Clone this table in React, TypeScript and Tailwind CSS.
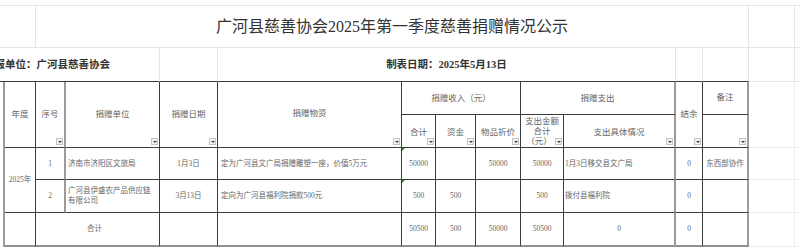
import React from "react";

const Filter = () => (
  <span className="absolute right-px bottom-[2px] w-[7px] h-[7px] border border-[#c4c4c4] bg-[#f4f4f4] flex items-center justify-center">
    <span className="w-0 h-0 border-l-[2px] border-r-[2px] border-t-[2px] border-l-transparent border-r-transparent border-t-[#3a3a3a]" />
  </span>
);

const Green = () => (
  <span className="absolute left-0 top-0 w-0 h-0 border-t-[3px] border-r-[3px] border-t-[#2f8a3a] border-r-transparent" />
);

export default function App() {
  return (
    <div className="w-[800px] h-[251px] overflow-hidden bg-white">
      <div className="grid grid-cols-[5px_31px_30px_94px_58px_184px_34px_40px_45px_43px_112px_27px_46px_46px_5px] grid-rows-[6px_42px_34px_33px_33px_32px_33px_34px_4px] font-['Liberation_Serif','Noto_Sans_CJK_SC',serif] text-[#666]">
        {/* top strip */}
        <div className="col-start-1 col-span-15 row-start-1 border-b border-[#e6e6e6]" />

        {/* title row */}
        <div className="col-start-1 col-span-2 row-start-2 border-r border-b border-[#e6e6e6]" />
        <div className="col-start-3 col-span-11 row-start-2 border-r border-b border-[#e6e6e6] flex items-center justify-center text-[16px] text-[#333] pt-[1px]">
          广河县慈善协会2025年第一季度慈善捐赠情况公示
        </div>
        <div className="col-start-14 row-start-2 border-r border-b border-[#e6e6e6]" />
        <div className="col-start-15 row-start-2 border-b border-[#e6e6e6]" />

        {/* info row */}
        <div className="col-start-1 col-span-4 row-start-3 border-r border-r-[#e6e6e6] border-b border-b-[#3c3c3c] overflow-hidden flex items-center">
          <span className="ml-[-16px] whitespace-nowrap text-[10.5px] font-bold text-[#333]">填报单位：广河县慈善协会</span>
        </div>
        <div className="col-start-5 row-start-3 border-r border-r-[#e6e6e6] border-b border-b-[#3c3c3c]" />
        <div className="col-start-6 col-span-6 row-start-3 border-r border-r-[#e6e6e6] border-b border-b-[#3c3c3c] flex items-center justify-center">
          <span className="whitespace-nowrap text-[10.5px] font-bold text-[#333]">制表日期：2025年5月13日</span>
        </div>
        <div className="col-start-12 row-start-3 border-r border-r-[#e6e6e6] border-b border-b-[#3c3c3c]" />
        <div className="col-start-13 row-start-3 border-r border-r-[#e6e6e6] border-b border-b-[#3c3c3c]" />
        <div className="col-start-14 row-start-3 border-r border-b border-[#e6e6e6]" />
        <div className="col-start-15 row-start-3 border-b border-[#e6e6e6]" />

        {/* left table edge */}
        <div className="col-start-1 row-start-4 row-span-5 border-r-2 border-[#9b9b9b]" />

        {/* header row 1 */}
        <div className="col-start-2 row-start-4 row-span-2 border-r border-b border-[#3c3c3c] flex items-center justify-center text-[8.5px]">年度</div>
        <div className="relative col-start-3 row-start-4 row-span-2 border-r-2 border-r-[#9b9b9b] border-b border-b-[#3c3c3c] flex items-center justify-center text-[8.5px]">序号<Filter /></div>
        <div className="relative col-start-4 row-start-4 row-span-2 border-r border-b border-[#3c3c3c] flex items-center justify-center text-[8.5px]">捐赠单位<Filter /></div>
        <div className="relative col-start-5 row-start-4 row-span-2 border-r border-b border-[#3c3c3c] flex items-center justify-center text-[8.5px]">捐赠日期<Filter /></div>
        <div className="relative col-start-6 row-start-4 row-span-2 border-r border-b border-[#3c3c3c] flex items-center justify-center text-[8.5px] pb-[2px]">捐赠物资<Filter /></div>
        <div className="col-start-7 col-span-3 row-start-4 border-r border-b border-[#3c3c3c] flex items-center justify-center text-[8.5px]">捐赠收入（元）</div>
        <div className="col-start-10 col-span-2 row-start-4 border-r-2 border-r-[#9b9b9b] border-b border-b-[#3c3c3c] flex items-center justify-center text-[8.5px]">捐赠支出</div>
        <div className="relative col-start-12 row-start-4 row-span-2 border-r border-b border-[#3c3c3c] flex items-center justify-center text-[8.5px]">结余<Filter /></div>
        <div className="col-start-13 row-start-4 border-r-2 border-r-[#9b9b9b] border-b border-b-[#3c3c3c] flex items-center justify-center text-[8.5px] pb-[2px]">备注</div>
        <div className="col-start-14 row-start-4 row-span-2 border-r border-b border-[#ededed]" />
        <div className="col-start-15 row-start-4 row-span-2 border-b border-[#ededed]" />

        {/* header row 2 */}
        <div className="relative col-start-7 row-start-5 border-r border-b border-[#3c3c3c] flex items-center justify-center text-[8.5px] pt-[2px]">合计<Filter /></div>
        <div className="relative col-start-8 row-start-5 border-r border-b border-[#3c3c3c] flex items-center justify-center text-[8.5px] pt-[2px]">资金<Filter /></div>
        <div className="relative col-start-9 row-start-5 border-r border-b border-[#3c3c3c] flex items-center justify-center text-[8.5px] pt-[2px]">物品折价<Filter /></div>
        <div className="relative col-start-10 row-start-5 border-r border-b border-[#3c3c3c] flex flex-col items-center justify-center text-[8.5px] leading-[10px]">
          <span>支出金额</span>
          <span>合计</span>
          <span className="pr-[6px]">（元）</span>
          <Filter />
        </div>
        <div className="relative col-start-11 row-start-5 border-r-2 border-r-[#9b9b9b] border-b border-b-[#3c3c3c] flex items-center justify-center text-[8.5px] pt-[2px]">支出具体情况<Filter /></div>
        <div className="relative col-start-13 row-start-5 border-r-2 border-r-[#9b9b9b] border-b border-b-[#3c3c3c]"><Filter /></div>

        {/* data row 1 */}
        <div className="col-start-2 row-start-6 row-span-2 border-r border-b border-[#3c3c3c] flex items-center justify-center text-[7.5px]">2025年</div>
        <div className="col-start-3 row-start-6 border-r-2 border-r-[#9b9b9b] border-b border-b-[#3c3c3c] flex items-center justify-center text-[7.5px]">1</div>
        <div className="col-start-4 row-start-6 border-r border-b border-[#3c3c3c] flex items-center pl-[2px] text-[7.5px] whitespace-nowrap">济南市济阳区文旅局</div>
        <div className="col-start-5 row-start-6 border-r border-b border-[#3c3c3c] flex items-center justify-center text-[7.5px]">1月3日</div>
        <div className="col-start-6 row-start-6 border-r border-b border-[#3c3c3c] flex items-center pl-[3px] text-[7.5px] whitespace-nowrap">定为广河县文广局捐赠雕塑一座，价值5万元</div>
        <div className="relative col-start-7 row-start-6 border-r border-b border-[#3c3c3c] flex items-center justify-center text-[7.5px]"><Green />50000</div>
        <div className="col-start-8 row-start-6 border-r border-b border-[#3c3c3c]" />
        <div className="col-start-9 row-start-6 border-r border-b border-[#3c3c3c] flex items-center justify-center text-[7.5px]">50000</div>
        <div className="col-start-10 row-start-6 border-r border-b border-[#3c3c3c] flex items-center justify-center text-[7.5px]">50000</div>
        <div className="col-start-11 row-start-6 border-r-2 border-r-[#9b9b9b] border-b border-b-[#3c3c3c] flex items-center pl-[1px] text-[7.5px] whitespace-nowrap">1月3日移交县文广局</div>
        <div className="col-start-12 row-start-6 border-r border-b border-[#3c3c3c] flex items-center justify-center text-[7.5px]">0</div>
        <div className="col-start-13 row-start-6 border-r-2 border-r-[#9b9b9b] border-b border-b-[#3c3c3c] flex items-center justify-center text-[7.5px] whitespace-nowrap">东西部协作</div>
        <div className="col-start-14 row-start-6 border-r border-b border-[#ededed]" />
        <div className="col-start-15 row-start-6 border-b border-[#ededed]" />

        {/* data row 2 */}
        <div className="col-start-3 row-start-7 border-r-2 border-r-[#9b9b9b] border-b border-b-[#3c3c3c] flex items-center justify-center text-[7.5px]">2</div>
        <div className="col-start-4 row-start-7 border-r border-b border-[#3c3c3c] flex flex-col justify-center pl-[2px] text-[7.5px] leading-[10px] whitespace-nowrap">
          <span>广河县伊盛农产品供应链</span>
          <span>有限公司</span>
        </div>
        <div className="col-start-5 row-start-7 border-r border-b border-[#3c3c3c] flex items-center justify-center text-[7.5px]">3月13日</div>
        <div className="col-start-6 row-start-7 border-r border-b border-[#3c3c3c] flex items-center pl-[3px] text-[7.5px] whitespace-nowrap">定向为广河县福利院捐款500元</div>
        <div className="relative col-start-7 row-start-7 border-r border-b border-[#3c3c3c] flex items-center justify-center text-[7.5px]"><Green />500</div>
        <div className="col-start-8 row-start-7 border-r border-b border-[#3c3c3c] flex items-center justify-center text-[7.5px]">500</div>
        <div className="col-start-9 row-start-7 border-r border-b border-[#3c3c3c]" />
        <div className="col-start-10 row-start-7 border-r border-b border-[#3c3c3c] flex items-center justify-center text-[7.5px]">500</div>
        <div className="col-start-11 row-start-7 border-r-2 border-r-[#9b9b9b] border-b border-b-[#3c3c3c] flex items-center pl-[1px] text-[7.5px] whitespace-nowrap">拨付县福利院</div>
        <div className="col-start-12 row-start-7 border-r border-b border-[#3c3c3c] flex items-center justify-center text-[7.5px]">0</div>
        <div className="col-start-13 row-start-7 border-r-2 border-r-[#9b9b9b] border-b border-b-[#3c3c3c]" />
        <div className="col-start-14 row-start-7 border-r border-b border-[#ededed]" />
        <div className="col-start-15 row-start-7 border-b border-[#ededed]" />

        {/* total row */}
        <div className="col-start-2 row-start-8 border-r border-r-[#3c3c3c] border-b-2 border-b-[#8f8f8f]" />
        <div className="col-start-3 col-span-2 row-start-8 border-r border-r-[#3c3c3c] border-b-2 border-b-[#8f8f8f] flex items-center justify-center text-[7.5px] pr-[6px]">合计</div>
        <div className="col-start-5 row-start-8 border-r border-r-[#3c3c3c] border-b-2 border-b-[#8f8f8f]" />
        <div className="col-start-6 row-start-8 border-r border-r-[#3c3c3c] border-b-2 border-b-[#8f8f8f]" />
        <div className="col-start-7 row-start-8 border-r border-r-[#3c3c3c] border-b-2 border-b-[#8f8f8f] flex items-center justify-center text-[7.5px]">50500</div>
        <div className="col-start-8 row-start-8 border-r border-r-[#3c3c3c] border-b-2 border-b-[#8f8f8f] flex items-center justify-center text-[7.5px]">500</div>
        <div className="col-start-9 row-start-8 border-r border-r-[#3c3c3c] border-b-2 border-b-[#8f8f8f] flex items-center justify-center text-[7.5px]">50000</div>
        <div className="col-start-10 row-start-8 border-r border-r-[#3c3c3c] border-b-2 border-b-[#8f8f8f] flex items-center justify-center text-[7.5px]">50500</div>
        <div className="col-start-11 row-start-8 border-r-2 border-r-[#9b9b9b] border-b-2 border-b-[#8f8f8f] flex items-center justify-center text-[7.5px]">0</div>
        <div className="col-start-12 row-start-8 border-r border-r-[#3c3c3c] border-b-2 border-b-[#8f8f8f] flex items-center justify-center text-[7.5px]">0</div>
        <div className="col-start-13 row-start-8 border-r-2 border-r-[#9b9b9b] border-b-2 border-b-[#8f8f8f]" />
        <div className="col-start-14 row-start-8 border-r border-b border-[#ededed]" />
        <div className="col-start-15 row-start-8 border-b border-[#ededed]" />
      </div>
    </div>
  );
}
